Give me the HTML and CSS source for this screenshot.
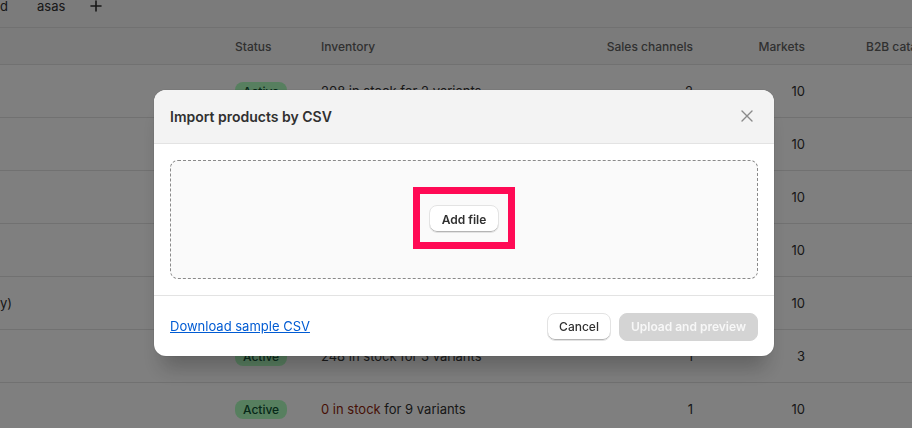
FILE: index.html
```html
<!DOCTYPE html>
<html lang="en">
<head>
  <meta charset="UTF-8">
  <meta name="viewport" content="width=device-width, initial-scale=1.0">
  <title>Products</title>
  <link rel="stylesheet" href="styles.css">
</head>
<body>
  <div class="page">
    <div class="tabs">
      <span class="tab tab-cut">d</span>
      <span class="tab">asas</span>
      <span class="tab tab-add">
        <svg width="12" height="12" viewBox="0 0 12 12"><path d="M6 1v10M1 6h10" stroke="#303030" stroke-width="1.6" stroke-linecap="round"/></svg>
      </span>
    </div>

    <div class="table">
      <div class="row head">
        <div class="cell"></div>
        <div class="cell">Status</div>
        <div class="cell">Inventory</div>
        <div class="cell num">Sales channels</div>
        <div class="cell num">Markets</div>
        <div class="cell b2b">B2B catalogs</div>
      </div>
      <div class="row">
        <div class="cell"></div>
        <div class="cell"><span class="badge">Active</span></div>
        <div class="cell">208 in stock for 2 variants</div>
        <div class="cell num">2</div>
        <div class="cell num">10</div>
        <div class="cell b2b"></div>
      </div>
      <div class="row">
        <div class="cell"></div>
        <div class="cell"><span class="badge">Active</span></div>
        <div class="cell">150 in stock for 4 variants</div>
        <div class="cell num">2</div>
        <div class="cell num">10</div>
        <div class="cell b2b"></div>
      </div>
      <div class="row">
        <div class="cell"></div>
        <div class="cell"><span class="badge">Active</span></div>
        <div class="cell">96 in stock for 2 variants</div>
        <div class="cell num">2</div>
        <div class="cell num">10</div>
        <div class="cell b2b"></div>
      </div>
      <div class="row">
        <div class="cell"></div>
        <div class="cell"><span class="badge">Active</span></div>
        <div class="cell">312 in stock for 6 variants</div>
        <div class="cell num">1</div>
        <div class="cell num">10</div>
        <div class="cell b2b"></div>
      </div>
      <div class="row">
        <div class="cell name">y)</div>
        <div class="cell"><span class="badge">Active</span></div>
        <div class="cell">40 in stock for 1 variant</div>
        <div class="cell num">1</div>
        <div class="cell num">10</div>
        <div class="cell b2b"></div>
      </div>
      <div class="row">
        <div class="cell"></div>
        <div class="cell"><span class="badge">Active</span></div>
        <div class="cell">248 in stock for 3 variants</div>
        <div class="cell num">1</div>
        <div class="cell num">3</div>
        <div class="cell b2b"></div>
      </div>
      <div class="row">
        <div class="cell"></div>
        <div class="cell"><span class="badge">Active</span></div>
        <div class="cell"><span class="out">0 in stock</span>&nbsp;for 9 variants</div>
        <div class="cell num">1</div>
        <div class="cell num">10</div>
        <div class="cell b2b"></div>
      </div>
    </div>
  </div>

  <div class="backdrop">
    <div class="modal">
      <div class="modal-header">
        <h2>Import products by CSV</h2>
        <button class="close" aria-label="Close">
          <svg width="12" height="12" viewBox="0 0 12 12"><path d="M1 1l10 10M11 1L1 11" stroke="#8a8a8a" stroke-width="1.4" stroke-linecap="round"/></svg>
        </button>
      </div>
      <div class="modal-body">
        <div class="dropzone">
          <div class="highlight">
            <button class="btn">Add file</button>
          </div>
        </div>
      </div>
      <div class="modal-footer">
        <a href="#" class="link">Download sample CSV</a>
        <div class="actions">
          <button class="btn btn-plain">Cancel</button>
          <button class="btn btn-disabled">Upload and preview</button>
        </div>
      </div>
    </div>
  </div>
</body>
</html>
```

FILE: styles.css
```css
body {
  margin: 0;
  font-family: Inter, "Noto Sans", sans-serif;
  font-size: 13px;
  color: #303030;
  background: #fff;
  overflow: hidden;
}
.page {
  width: 912px;
}
.tabs {
  display: flex;
  align-items: flex-start;
  height: 28px;
  background: #f6f6f6;
  border-bottom: 1px solid #e3e3e3;
  box-sizing: border-box;
}
.tab {
  color: #303030;
  line-height: 12px;
  margin-right: 25px;
}
.tab-cut {
  margin-right: 29px;
}
.tab-add {
  display: flex;
}
.table {
  display: flex;
  flex-direction: column;
}
.row {
  display: grid;
  grid-template-columns: 223px 86px 284px 112px 112px 1fr;
  align-items: center;
  height: 52px;
  border-bottom: 1px solid #e3e3e3;
}
.row.head {
  height: 36px;
  background: #f7f7f7;
  color: #616161;
  font-weight: 500;
  font-size: 12px;
}
.cell {
  padding: 0 12px;
  white-space: nowrap;
  overflow: hidden;
}
.cell.name {
  padding-left: 0;
}
.num {
  text-align: right;
}
.b2b {
  padding-left: 49px;
}
.badge {
  display: inline-block;
  background: #affebf;
  color: #0c5132;
  border-radius: 8px;
  padding: 2px 8px;
  font-size: 12px;
  font-weight: 500;
}
.out {
  color: #8e1f0b;
}

.backdrop {
  position: fixed;
  inset: 0;
  background: rgba(0, 0, 0, 0.5);
  display: flex;
  align-items: center;
  justify-content: center;
  padding: 17px 0 0 16px;
  box-sizing: border-box;
}
.modal {
  width: 620px;
  background: #fff;
  border-radius: 12px;
  overflow: hidden;
  box-shadow: 0 20px 20px -8px rgba(26, 26, 26, 0.28), 0 0 0 1px rgba(0, 0, 0, 0.05);
}
.modal-header {
  display: flex;
  align-items: center;
  justify-content: space-between;
  height: 53px;
  padding: 0 16px;
  background: #f3f3f3;
  border-bottom: 1px solid #e3e3e3;
}
.modal-header h2 {
  margin: 0;
  font-size: 14px;
  font-weight: 600;
  color: #303030;
}
.close {
  border: none;
  background: none;
  padding: 0;
  margin-right: 5px;
  display: flex;
  cursor: pointer;
}
.modal-body {
  padding: 16px;
  border-bottom: 1px solid #e3e3e3;
}
.dropzone {
  height: 117px;
  border: 1px dashed #8a8a8a;
  border-radius: 8px;
  background: #fafafa;
  display: flex;
  align-items: center;
  justify-content: center;
}
.highlight {
  border: 7px solid #ff0a55;
  padding: 11px 9px 9px;
  margin-top: -2px;
}
.btn {
  font-family: Inter, "Noto Sans", sans-serif;
  font-size: 12px;
  font-weight: 600;
  color: #303030;
  background: #fff;
  border: 1px solid #e3e3e3;
  border-radius: 8px;
  box-shadow: inset 0 -1px 0 #b5b5b5;
  height: 28px;
  padding: 0 12px;
  cursor: pointer;
}
.btn-plain {
  font-weight: 500;
  padding: 0 11px;
}
.modal-footer {
  display: flex;
  align-items: center;
  justify-content: space-between;
  height: 60px;
  padding: 0 16px;
}
.link {
  color: #005bd3;
  text-decoration: underline;
  font-size: 13px;
}
.actions {
  display: flex;
  gap: 8px;
  margin-top: 2px;
}
.btn-disabled {
  background: #d4d4d4;
  color: #f7f7f7;
  border-color: #d4d4d4;
  box-shadow: none;
  padding: 0 11px;
  cursor: default;
}
```
